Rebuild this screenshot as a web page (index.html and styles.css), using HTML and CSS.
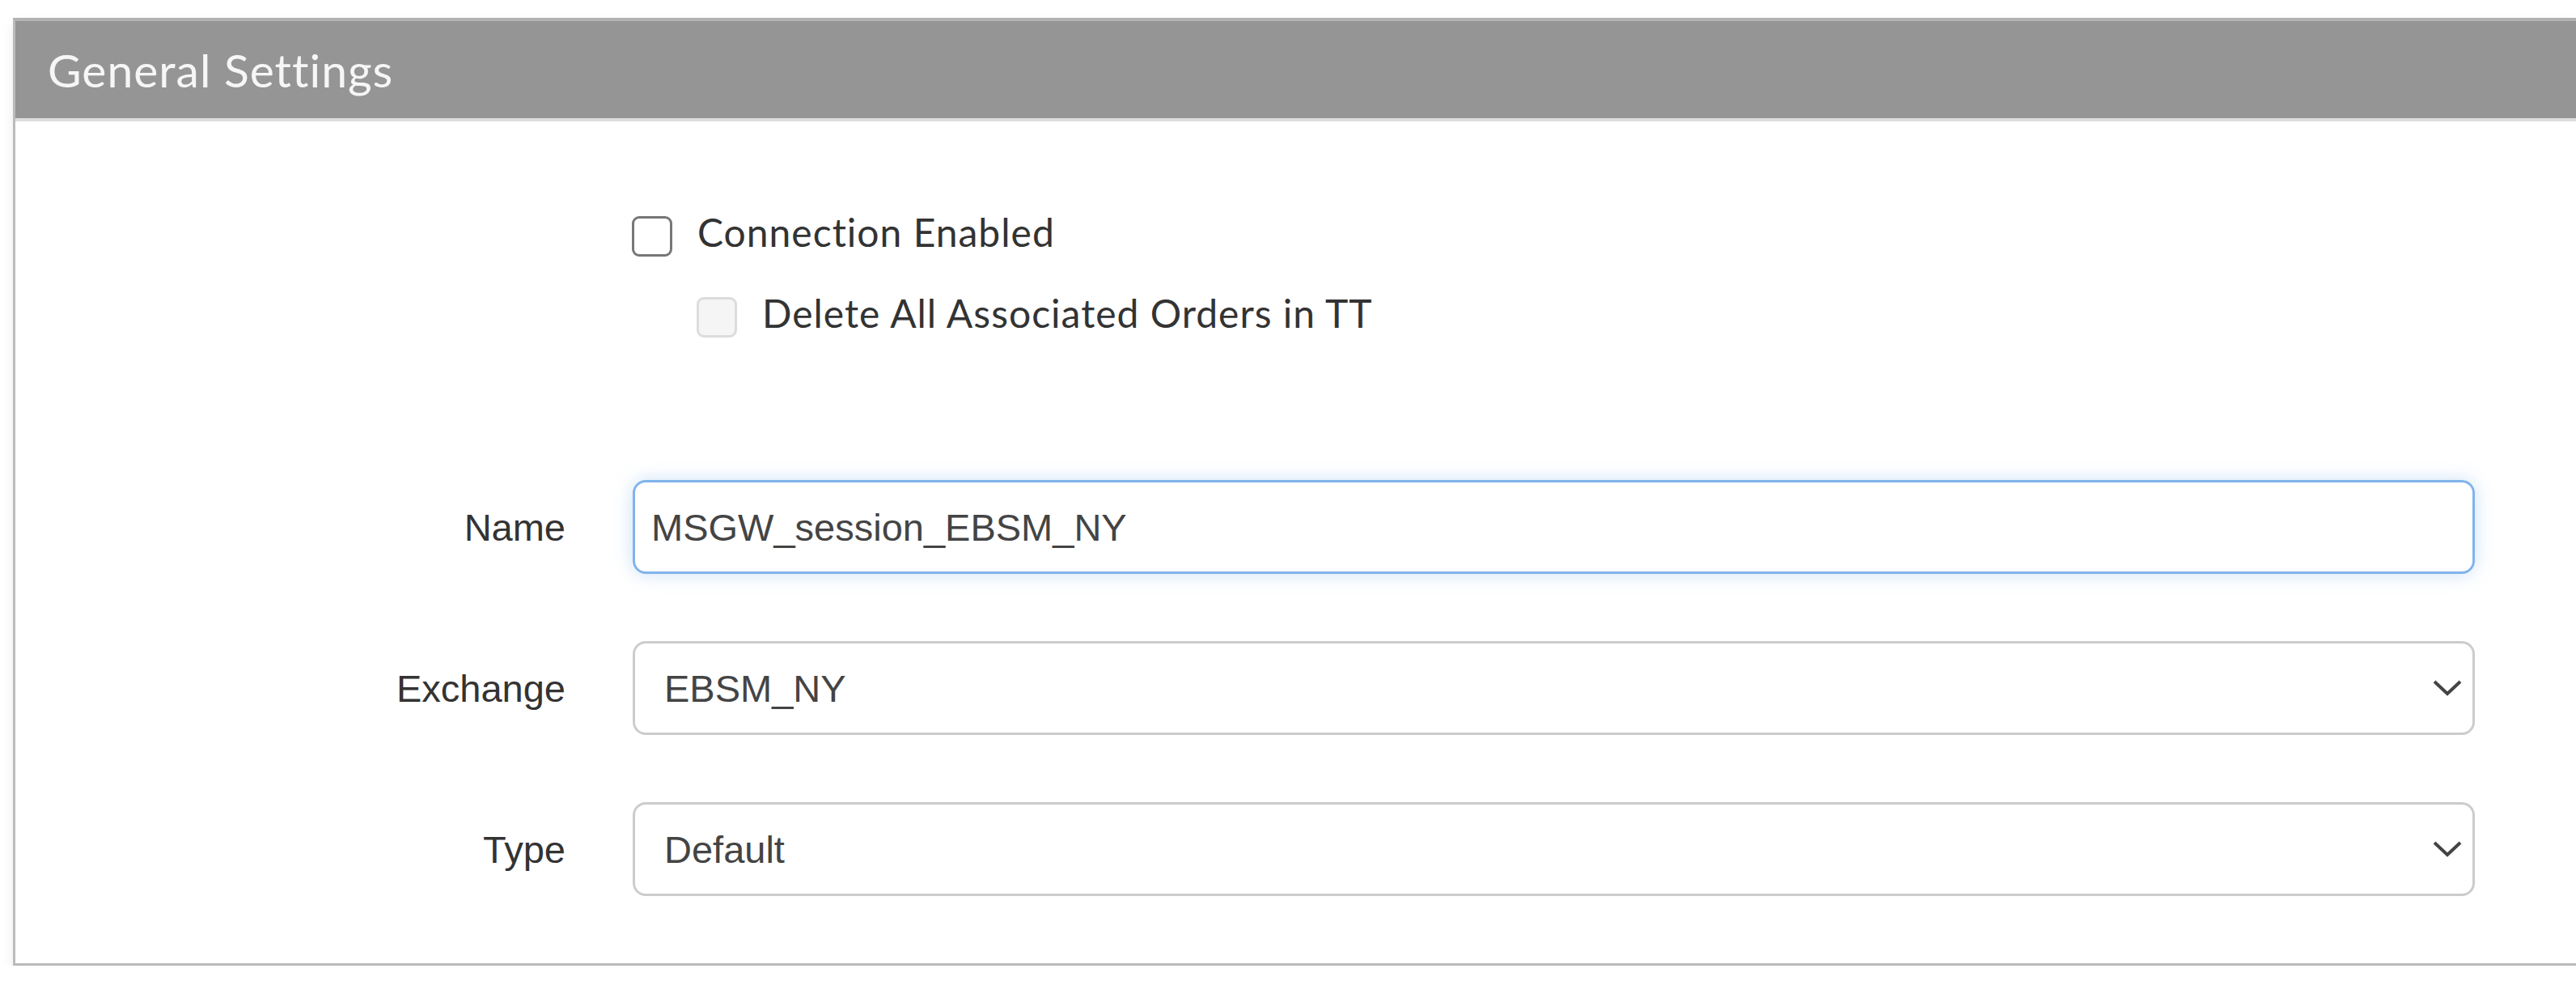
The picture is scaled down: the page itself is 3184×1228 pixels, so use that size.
FILE: index.html
```html
<!DOCTYPE html>
<html lang="en">
<head>
    <meta charset="UTF-8"/>
    <title>General Settings</title>
    <link rel="stylesheet" href="styles.css">
</head>
<body>
<section class="panel">
    <header class="panel-head">General Settings</header>

    <div class="panel-body">
        <div class="checks">
            <label class="check-row">
                <span class="check"></span>
                <span class="check-text">Connection Enabled</span>
            </label>
            <label class="check-row sub">
                <span class="check disabled"></span>
                <span class="check-text">Delete All Associated Orders in TT</span>
            </label>
        </div>

        <div class="form-row">
            <span class="field-label">Name</span>
            <div class="field text focused">MSGW_session_EBSM_NY</div>
        </div>

        <div class="form-row">
            <span class="field-label">Exchange</span>
            <div class="field select">
                <span>EBSM_NY</span>
                <svg class="chevron" viewBox="0 0 36 20"><polyline points="2,2 18,17 34,2"/></svg>
            </div>
        </div>

        <div class="form-row">
            <span class="field-label">Type</span>
            <div class="field select">
                <span>Default</span>
                <svg class="chevron" viewBox="0 0 36 20"><polyline points="2,2 18,17 34,2"/></svg>
            </div>
        </div>
    </div>
</section>
</body>
</html>
```

FILE: styles.css
```css
html, body {
    margin: 0;
    padding: 0;
    background: #fff;
}

body {
    padding: 22px 0 0 16px;
}

.panel {
    border: 3px solid #bbb;
    border-top: 4px solid #b3b3b3;
    border-right: none;
    background: #fff;
    box-shadow: 0 6px 14px rgba(0, 0, 0, 0.08);
}

.panel-head {
    height: 120px;
    display: flex;
    align-items: center;
    padding-left: 40px;
    background: #959595;
    border-bottom: 4px solid #ddd;
    color: #f6f6f6;
    font-family: Lato, "Noto Sans", sans-serif;
    font-weight: 400;
    font-size: 57px;
    letter-spacing: 1px;
}

.panel-body {
    display: flex;
    flex-direction: column;
    padding: 117px 125px 83px 0;
}

.checks {
    display: flex;
    flex-direction: column;
    gap: 50px;
    padding-left: 762px;
    margin-bottom: 176px;
}

.check-row {
    display: flex;
    align-items: center;
    gap: 31px;
    height: 50px;
    color: #333;
    font-family: Lato, "Noto Sans", sans-serif;
    font-size: 48px;
    letter-spacing: 1px;
}

.check-text {
    padding-bottom: 12px;
}

.check-row.sub {
    padding-left: 80px;
}

.check {
    width: 50px;
    height: 50px;
    box-sizing: border-box;
    border: 3px solid #777;
    border-radius: 9px;
    flex-shrink: 0;
}

.check.disabled {
    background: #f5f5f5;
    border-color: #dcdcdc;
}

.form-row {
    display: grid;
    grid-template-columns: 680px 1fr;
    column-gap: 83px;
    align-items: center;
    margin-bottom: 83px;
}

.form-row:last-child {
    margin-bottom: 0;
}

.field-label {
    text-align: right;
    color: #333;
    font-family: "Liberation Sans", Arial, sans-serif;
    font-size: 47px;
}

.field {
    height: 116px;
    box-sizing: border-box;
    border: 3px solid #ccc;
    border-radius: 16px;
    display: flex;
    align-items: center;
    color: #444;
    font-family: "Liberation Sans", Arial, sans-serif;
    font-size: 47px;
}

.field.text {
    padding-left: 20px;
}

.field.focused {
    border-color: #80b4ea;
    box-shadow: 0 0 22px rgba(110, 165, 230, 0.35);
}

.field.select {
    justify-content: space-between;
    padding: 0 13px 0 36px;
}

.chevron {
    width: 36px;
    height: 20px;
    fill: none;
    stroke: #444;
    stroke-width: 4;
}
```
